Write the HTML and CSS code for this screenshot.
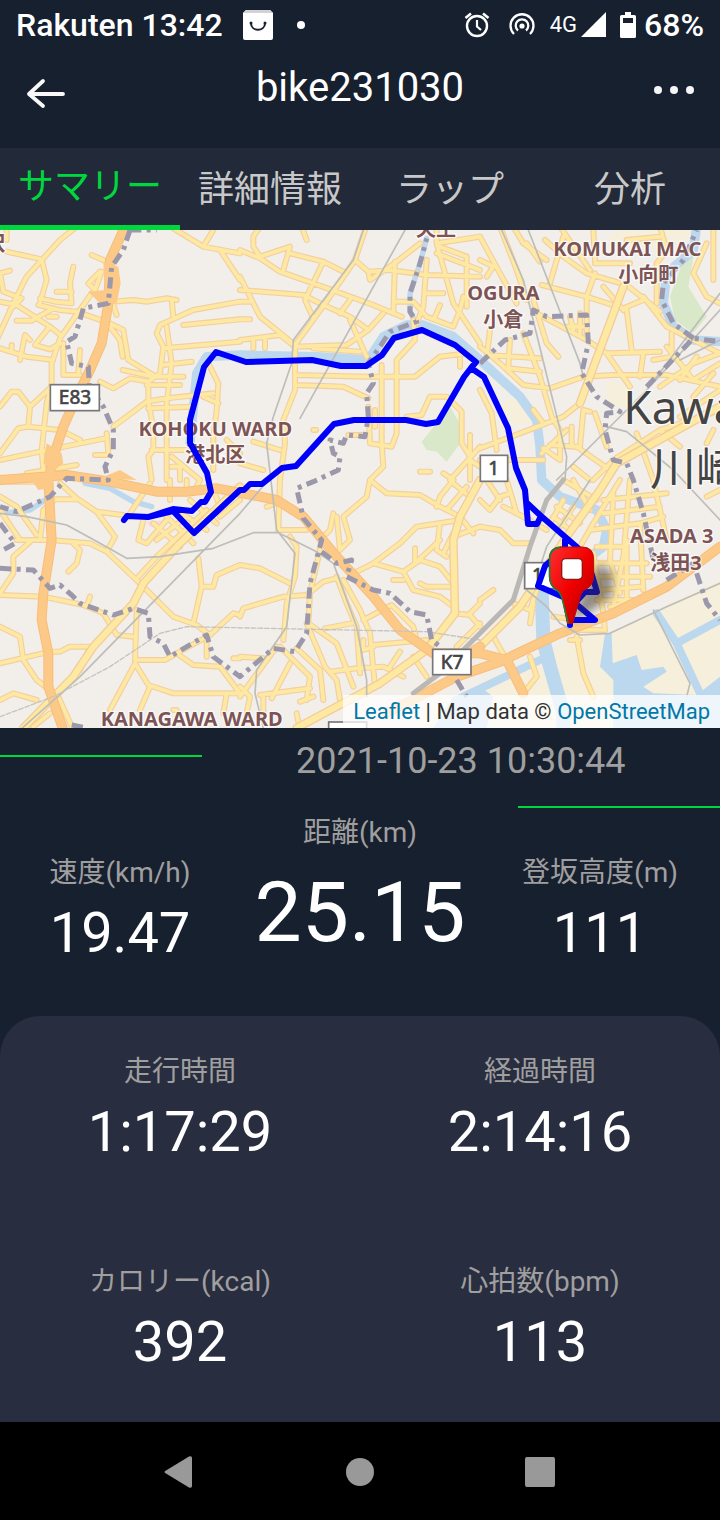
FILE: index.html
```html
<!DOCTYPE html>
<html lang="ja">
<head>
<meta charset="utf-8">
<meta name="viewport" content="width=device-width, initial-scale=1">
<title>bike231030</title>
<link rel="stylesheet" href="styles.css">
</head>
<body>
<div class="app">
  <div class="status">
    <div class="status-left">
      <span class="status-text">Rakuten 13:42</span>
      <svg class="bag" viewBox="0 0 30 30" width="30" height="30" aria-hidden="true"><path d="M3 0H27L30 3V28Q30 30 28 30H2Q0 30 0 28V3Z" fill="#fff"/><path d="M3 0H27L30 3H0Z" fill="#d3d3d6"/><path d="M8 13C8 22 22 22 22 13" fill="none" stroke="#182030" stroke-width="2"/><circle cx="8" cy="13" r="1.5" fill="#182030"/><circle cx="22" cy="13" r="1.5" fill="#182030"/></svg>
      <svg viewBox="0 0 8 8" width="8" height="8" aria-hidden="true"><circle cx="4" cy="4" r="4" fill="#fff"/></svg>
    </div>
    <div class="status-right">
      <svg viewBox="0 0 26 26" width="26" height="26" fill="none" stroke="#fff" aria-hidden="true"><circle cx="13" cy="14" r="10" stroke-width="2.4"/><path d="M1.5 6L7 1.5M24.500 6L19 1.500" stroke-width="2.600"/><path d="M13 8V14.500L17 18" stroke-width="2.200"/></svg>
      <svg class="cast" viewBox="0 0 26 26" width="26" height="26" fill="none" stroke="#fff" stroke-width="2.300" aria-hidden="true"><circle cx="13" cy="14" r="2.600" fill="#fff" stroke="none"/><path d="M9 18.500A6.300 6.300 0 1 1 17 18.500M5 22A11.500 11.500 0 1 1 21 22"/></svg>
      <span class="net">4G</span>
      <svg viewBox="0 0 25 26" width="25" height="26" aria-hidden="true"><path d="M25 0V25H0Z" fill="#fff"/></svg>
      <svg class="battery" viewBox="0 0 16 26" width="16" height="26" aria-hidden="true"><path fill="#fff" fill-rule="evenodd" d="M5 0H11V3H14.500Q16 3 16 4.500V24.500Q16 26 14.500 26H1.500Q0 26 0 24.500V4.500Q0 3 1.500 3H5ZM3 6V11H13V6Z"/></svg>
      <span class="status-text">68%</span>
    </div>
  </div>

  <header class="header">
    <button class="icon-button back" aria-label="戻る"><svg viewBox="0 0 40 32" width="40" height="32" fill="none" stroke="#f8f8f8" stroke-width="3.800" stroke-linecap="round" stroke-linejoin="round"><path d="M17 3L3 16L17 28M3 16H37"/></svg></button>
    <h1 class="title">bike231030</h1>
    <button class="icon-button more" aria-label="メニュー"><svg viewBox="0 0 40 8" width="40" height="8" fill="#f5f5f5"><circle cx="4" cy="4" r="4"/><circle cx="20" cy="4" r="4"/><circle cx="36" cy="4" r="4"/></svg></button>
  </header>

  <nav class="tabs" role="tablist">
    <button class="tab tab-active" role="tab" aria-selected="true">サマリー</button>
    <button class="tab" role="tab" aria-selected="false">詳細情報</button>
    <button class="tab" role="tab" aria-selected="false">ラップ</button>
    <button class="tab" role="tab" aria-selected="false">分析</button>
  </nav>

  <div class="map">
    <svg class="map-canvas" viewBox="0 0 2160 1494" preserveAspectRatio="xMidYMid slice" role="img" aria-label="走行ルート">
      <defs>
        <linearGradient id="pin" x1="0" y1="0" x2="1" y2="1"><stop offset="0" stop-color="#ff3030"/><stop offset=".5" stop-color="#f00000"/><stop offset="1" stop-color="#a80000"/></linearGradient>
        <filter id="soft" x="-50%" y="-50%" width="200%" height="200%"><feGaussianBlur stdDeviation="12"/></filter>
        <g id="roads">
          <path d="M-10 330L45 210 80 140 180 30 230-10M20 65L125 88 140 150 118 225M30 122L0 130 10 185 65 205 30 240M0 215L50 225 150 290 185 318M220 110L210 160 215 220 165 215 120 205M170 185H215M115 225L180 240 230 245M50 272H95L160 235M145 260H170M275 190L180 325 155 400V460M150 358L105 345 145 295M150 358L180 340M0 355L80 380 160 390M35 345V365M60 390L75 315 90 330M0 530L35 485H55L90 530 85 590M90 530L150 475M0 670L55 595 85 590 180 600 240 630M0 690L120 665 315 625M155 460L140 520 125 660 130 720M275 75L310 90M300 125L265 160 285 180 305 125M340 215L400 210 440 215 500 205 530 210M230 245L330 280 370 300 385 390 460 435M330 290L360 330 368 380M340 225L350 255M720 215L580 240 480 285 470 310 490 350 480 430 445 455V510M550 285L720 268M490 355L720 335M515 210L520 260M500 290L515 400 500 520V750M368 420L460 440H550M440 465H540M490 405L575 395M300 455L340 475 390 445 445 455M340 590L440 515 500 505 640 490M445 535L580 530M445 510L460 600V660L445 680 455 750M190 340V435H240M240 360L235 430M520-5L610 50 720 70M610 50L640 0M660 60L720 150M625 400L655 460 650 540 640 620V720M610 500L655 520M455 660H560M285 675H325M320 610L325 670M515 680L600 750M515 710H540V750M80 730L230 705M20-10V30M680 630L720 670"/>
          <g transform="translate(720)"><path d="M0 60L60 85 120 125 220 160 290 185 400 225 485 260M60-10L40 20V50L60 80 150 50 130 120M150 70L250 95 310 125M185-10L200 30M250 95L195 210 220 265M0 180L190 195 250 225 330 260 385 300 430 250M0 140L60 260 165 345M375 0L345 90 270 200 165 345M345 90L385 125 390 150 470 95M390 125L450 120 560 135 720 140M465 95L460 250M540 40L470 95M465 215H520L560 260 640 290 660 240 670 200M560 90L550 230 530 280M590 40L640 220 720 340M600 50L680 80V230M590 70L720 120M560 190H610M600 225L585 260M0 330L120 315 165 350 320 345 385 300M165 345V480L130 570 135 640 120 750M165 435L380 440H525L600 380 680 370M170 465L310 470 385 505M330 270L380 380M220 355L360 365M520 270L525 330 470 390V610L455 650 390 640 385 530M425 405V640L430 710 390 750M405 540V590M40 635L120 660M0 700L70 720M0 215H30M0 268H30M40 330V355M75 325V355M330 210L300 250M500 560L545 555 570 500H620L665 545V640L690 680M690 615V750M630 750L720 650M325 615H380M540 725H570M660 385V410M610 730L640 750M220 600H228M690 690L720 710M590-10V40L720 20"/></g>
          <g transform="translate(1440)"><path d="M60-10L110 120 140 210M0 90L40 110 20 140M100-10L130 40 200 90M140 40L180 95M250 20L210 160M195 30L250 80 320 130 440 165 540 245M240-10L330 120M340 0L345 90M345 100H450M345 130L320 200M185 165L320 200 430 235 490 210M430 170L340 400 300 520 250 560 120 610 0 655M320 200V330M440 240L455 360M440 30L540 20M540-10L560 60 530 100V220M490 200L560 290 720 370M700 0V150M680 40L640 130 680 200 720 220M0 350L60 400 130 465 210 475 310 440 400 435H560L720 470M20 375L180 385M90 330L85 410M130 310L180 440 215 560 240 600V690M85 415L180 425M160 210L200 340 235 380M170 250L320 330 380 370 540 365M260 290H320M270 260L280 300M300 250V310M380 370L450 470M490 370L480 440M575 310V380L520 390M720 370L640 400 540 470M700 430L640 500M720 480L600 560M275 590V650H300L310 540 330 545M345 550L380 650M470 610L520 750M720 540L540 600 400 690 340 750M0 480L35 550 50 660M30 300L20 380M0 690H190M185 670L260 600M190 655L240 690M210 645L290 650 390 720M280 710L330 750M540 600L600 650M700 600L680 640M160 540L190 580M560 350L640 450 720 400M600 450L650 380M370 170L430 240M0 20L60 130 110 220"/></g>
          <g transform="translate(0 750)"><path d="M0 5H130M180 10L230 55 290 95 370 105M230 58H165L130 90 120 180M0 50L50 80 110 165M0 90L60 180M0 340L40 280V230L90 185M50 180H150L270 190 320 215 420 310 520 410 590 435 630 465M220 190L240 210 230 250 205 275M290 95L345 170 320 215M0 345L130 350 250 375 310 400 350 465 400 470M270 350L260 380M410 390L405 540H495L630 465 700 400 720 405M0 440L60 470 70 540 110 600 150 630M0 550L150 515H180L210 500H270L240 570M405 550L330 690M405 550L445 615 520 640H720M450 620L420 690M530 520L580 555 660 560 720 640M680 640L670 700M595 235L605 320 580 430M605 320H640L650 285 720 255M620 470V530M0 660L40 640 110 660M150 700L100 740M430 120L415 180 440 190 500 120M460 130L540 200M490 100L580 190M530 90L620 150M415 290L470 230 620 90M470 180L560 110M510 0V60M390 100L450 10M640 30L660 80M570 60L650 130M660 110L720 60M700 535H720M170 640L220 750M520 690H530M560 0V20M600 0L590 20"/></g>
          <g transform="translate(720 750)"><path d="M390 0L440 40 540 45 600 80 660 110 700 160M390 0L380 50 310 110 330 180 300 210 290 110M280 100L270 150 240 180M660 110L640 180M590 80L600 50 640 0M620 90L680 20M640 10L690 50M660 120L530 140 480 190 400 250 340 280M400 250L490 275 520 330 600 350 640 380M490 275L540 240 600 260 640 310M525 205V250L600 180M460 300H490M540 310L560 320H640M600 130L590 210 620 230M610 220L640 160M640 170L720 140M640 400L690 405 720 440M690 400L720 370M0 255L60 265 150 310M120 0L115 150H200M80 80L110 70M150 170L170 200 165 290 140 370 130 480M0 410L10 385 130 350 200 345 250 305 290 295M240 210L210 340 205 430 290 490 340 620M290 290L320 370 350 440 360 580M310 300L360 390 390 460 405 620M370 420L455 375 520 440 530 480M255 445L335 430M400 495L560 480M370 480V510L400 500M120 500L210 590 200 660M170 505L240 570 250 660M150 550L95 655M60 645L210 625M270 575L350 565 430 560 490 590M480 515L450 560M0 650L110 500M0 620L30 650 20 700M0 530L70 535M200 430L255 560 290 600 300 660M520 530L560 590M170 700L180 750M70 650V700M650 500L720 430M180 665L220 650"/></g>
          <g transform="translate(1440 750)"><path d="M0 60L30 90 60 50 90 40M0 140L60 150 100 190H150M70 80L150 120M20 0L60 60M250 0L350 60M420 0L340 130 300 200M230 80L300 130M220 110L270 150M250 60L210 130M280 80L240 140M330 150L480 130 550 110M400 40L390 240 420 340M350 250H500M350 290H510M360 330L480 320M450 0L430 230 400 380M520 0L560 180M370 60L560 40M370 100L540 80M480 130L490 330M340 220L370 400M440 180V370M0 500L130 360 160 320M100 370L150 390 170 330M150 430L160 370M290 470L310 580 340 650M150 530L170 590 130 640M40 470L80 540M270 480H300M220 410L300 420M370 400L375 450H300M720 30L680 50M0 360L40 330M350 360H480M390 380L470 360M350 200H440M80 0L110 100 200 150M280 0L330 90"/></g>
        </g>
        <g id="primary"><path d="M70 1494L220 1340 280 1250 400 1120 430 1060 540 940 720 770M890 1494L1140 1360 1280 1260 1365 1150 1360 930 1380 860 1440 750M1440 1250L1560 1130 1620 1040 1700 920 1800 780 1850 700 2160 530M1870 170L1740 520"/></g>
        <g id="motorways"><path d="M375-10L330 90 325 220 305 340 270 420 230 500 190 590 160 680 145 750 155 930 130 1090 125 1170 145 1270V1370L190 1500M0 750L200 735 330 755 470 785 560 785 650 775 780 800 830 810 910 860 1010 980 1120 1100 1200 1200 1300 1270H1440L1520 1290 1570 1390M1160 1450L1370 1340 1500 1295 1680 1210 1840 1150 2000 1070 2160 950M1300 1270L1360 1300 1440 1250"/></g>
      </defs>
      <rect width="2160" height="1494" fill="#f2eee9"/>
      <path class="industry" d="M1200 1494L1440 1360 1740 1220 1820 1210 1970 1140 2160 1050V1494ZM1560 500L1620 530 1610 570 1500 600 1500 520ZM1820 455L1890 460V530H1820ZM1850 0H2100L2000 60 1820 30Z"/>
      <path class="park" d="M1265 635L1350 530 1385 590 1380 640 1340 695 1310 665 1280 660ZM2050 90L2080 80 2065 170 2120 260 2080 310 2025 270 2010 200Z"/>
      <path d="M440 875L500 870 480 895 450 890Z" fill="#fbd8e8"/>
      <path class="water" stroke-width="28" d="M570 640L590 430 620 380 720 375 950 380 1105 390 1150 320 1220 285H1270L1360 320 1440 390 1560 500 1610 570 1620 650 1625 750 1680 800 1790 840 1820 900 1810 950 1770 980M2090-10L2080 60 2000 130 1990 220 2020 290 2080 330 2160 335"/>
      <path class="water" stroke-width="16" d="M1280 25L1260 100 1230 190V245L1250 285M255 760L330 775 400 815 455 830M0 850L90 840 150 800"/>
      <path class="water" stroke-width="42" d="M1625 1080L1630 1230 1650 1310 1690 1450V1500"/>
      <path class="water" stroke-width="24" d="M1390 1400L1620 1290M1970 1150L2030 1240 2100 1390M2030 1240L2160 1170"/>
      <path fill="#bbd8ee" d="M1815 1210H1835L1838 1300 1910 1275 1925 1320 1990 1310 2000 1325 1930 1370 1960 1390 2090 1395 2160 1340V1494H1840V1350L1800 1310ZM1360 1400L1440 1370 1480 1400 1460 1494H1300Z"/>
      <use href="#roads" class="road-casing"/>
      <use href="#roads" class="road-fill"/>
      <use href="#primary" class="primary-casing"/>
      <use href="#primary" class="primary-fill"/>
      <use href="#motorways" class="motorway-casing"/>
      <use href="#motorways" class="motorway-fill"/>
      <path fill="#fcc986" d="M310 95L355 110 362 160 350 220 310 230 265 185 315 180ZM140 640L185 670 190 700 165 720 130 700ZM300 745L360 720 410 750ZM95 750H160L145 775 115 780Z"/>
      <path class="rail" d="M1090 0L1060 90 880 330 875 400 820 560 800 640 830 900 885 970 860 1190 770 1320 765 1390 790 1494M1215 0L900 565M1505 0L1570 150 1700 680 1695 750M1585 0L1655 180 1740 400 1750 440M1670 750L1940 480 2160 190M1940 480L2160 240M2040 390L2160 330M1820 590L1880 605 2020 720 2160 870M0 850L80 860 200 885 300 940 380 985 480 980 640 955 760 908H835L950 965 1000 1000 1070 1190 1100 1350V1400M60 1500L240 1340 720 850 830 720M1580 1080L1640 1130 1680 1180 1740 1215 1830 1210 2000 1130 2160 1060M1960 1140L2070 1360 2060 1400M1770 750L1640 950 1620 1010"/>
      <path class="rail-thin" d="M0 1460L160 1400 330 1310 480 1210 560 1190 1280 1205 1440 1230"/>
      <path class="rail-wide" d="M1240 1390L1320 1330 1440 1210 1540 1110 1590 950 1640 810 1690 750"/>
      <path class="border" d="M390 0L370 60 335 110 325 220 250 235 225 320 200 335 215 400 265 410 268 470 310 530 340 600V660L315 710 325 750 200 745 150 800 50 845 0 830M390 0H470M0 880L45 940 0 965M0 1015L100 1020 150 1075 180 1065 215 1095 240 1120 340 1155 400 1135 445 1150 450 1220 490 1240 510 1280 620 1215 640 1280 720 1340 820 1255 885 1265 920 1210 930 1060 965 930 910 865 890 775 940 755 1015 720 1020 680 1000 670 990 630 1030 640 1040 615 1095 620 1105 560 1100 490 1120 460 1105 400 1140 350 1170 305 1250 275 1230 245V190L1260 100 1280 25M965 965L1010 1000 1055 990 1040 1040 1120 1080 1170 1090 1230 1145 1280 1155 1295 1230 1320 1250M1370 1350L1400 1400M1440 400L1515 330 1590 310 1600 240 1640 260 1760 255 1765 340 1745 430 1790 500 1860 545 1820 550 1815 600 1840 690 1880 700 1900 750 1930 850 1960 990M1940 470L2080 325 2160 335M2080 325L2020 280 1985 210 1990 160 2050 90 2090 0M2000 1050L2080 1000M2090 1030L2120 1120 2160 1170M215 1485L260 1494"/>

      <g class="shield">
        <rect x="151" y="464" width="147" height="78"/><text x="225" y="523">E83</text>
        <rect x="1441" y="676" width="82" height="78"/><text x="1481" y="735">1</text>
        <rect x="1574" y="998" width="115" height="78"/><text x="1612" y="1055">1</text>
        <rect x="1298" y="1258" width="115" height="76"/><text x="1356" y="1316">K7</text>
        <rect x="986" y="1476" width="114" height="76"/>
      </g>
      <g class="place">
        <text x="646" y="617">KOHOKU WARD</text><text x="646" y="696">港北区</text>
        <text x="1510" y="210">OGURA</text><text x="1510" y="290">小倉</text>
        <text x="1660" y="77" class="from-start">KOMUKAI MAC</text><text x="1945" y="155">小向町</text>
        <text x="575" y="1487">KANAGAWA WARD</text>
        <text x="1890" y="940" class="from-start">ASADA 3</text><text x="2028" y="1020">浅田3</text>
        <text x="1308" y="18">天王</text><text x="-44" y="62" class="from-start">沢</text>
      </g>
      <g class="city"><text x="1870" y="582">Kawasaki</text><text x="1950" y="765">川崎</text></g>

      <g transform="scale(3) translate(0 -230)" class="route">
        <path d="M124 520L127 516 148 517 173 509 192 511 201 502H205L211 492 207 473 190 443V420L204 367 216 352 246 362 312 360 341 366H366L382 355 394 338 422 330 455 345 476 362 471 368 484 377 508 428 516 468 525 490 528 524H537L541 516M527 503L541 516 578 548 592 575 597 592H585L575 603 595 620H570V625M565 540V548L545 566 538 586 570 600M471 368L464 377 438 422 426 424 406 420H354L334 424 296 466 282 468 262 484H250L244 490H240L194 533 173 511 148 517"/>
      </g>
      <g transform="translate(1440 750)">
        <path d="M272 425L320 310 360 250 400 280 395 350 330 395Z" fill="#332c20" opacity=".5" filter="url(#soft)"/>
        <path d="M242 201H306Q341 201 341 238V290Q341 318 310 332 302 342 298 360L278 430H262L248 360Q244 340 232 332 208 318 208 290V238Q208 201 242 201Z" fill="url(#pin)" stroke="#b80c0c" stroke-width="3"/>
        <path d="M240 202Q209 204 209 238V290Q210 318 232 332 244 342 248 362L264 428" fill="none" stroke="#287b35" stroke-width="5"/>
        <rect x="245" y="236" width="62" height="62" rx="12" fill="#fff" stroke="#8a1a14" stroke-width="4"/>
      </g>
    </svg>
    <div class="attribution"><a href="#leaflet">Leaflet</a> | Map data © <a href="#osm">OpenStreetMap</a></div>
  </div>

  <main class="content">
    <div class="date-row">
      <span class="rule rule-start"></span>
      <time class="date" datetime="2021-10-23T10:30:44">2021-10-23 10:30:44</time>
    </div>
    <div class="rule rule-end"></div>
    <section class="headline">
      <div class="stat"><span class="label">速度(km/h)</span><span class="value">19.47</span></div>
      <div class="stat stat-main"><span class="label">距離(km)</span><span class="value">25.15</span></div>
      <div class="stat"><span class="label">登坂高度(m)</span><span class="value">111</span></div>
    </section>
    <section class="panel">
      <div class="stat"><span class="label">走行時間</span><span class="value">1:17:29</span></div>
      <div class="stat"><span class="label">経過時間</span><span class="value">2:14:16</span></div>
      <div class="stat"><span class="label">カロリー(kcal)</span><span class="value">392</span></div>
      <div class="stat"><span class="label">心拍数(bpm)</span><span class="value">113</span></div>
    </section>
  </main>

  <nav class="system-nav">
    <button class="icon-button" aria-label="前の画面"><svg viewBox="0 0 32 34" width="32" height="34"><path d="M2 15.500L25 1.500Q28 .5 28 3V31Q28 33.500 25 32.500L2 18.500Q-1 17 2 15.500Z" fill="#999"/></svg></button>
    <button class="icon-button" aria-label="ホーム"><svg viewBox="0 0 28 28" width="28" height="28"><circle cx="14" cy="14" r="14" fill="#999"/></svg></button>
    <button class="icon-button" aria-label="アプリ一覧"><svg viewBox="0 0 30 30" width="30" height="30"><rect width="30" height="30" rx="2" fill="#999"/></svg></button>
  </nav>
</div>
</body>
</html>
```
FILE: styles.css
```css
* { box-sizing: border-box; }

body {
  margin: 0;
  background: #17202f;
  color: #fff;
  font-family: Roboto, "Noto Sans CJK JP", sans-serif;
}

button {
  margin: 0;
  padding: 0;
  border: 0;
  background: none;
  color: inherit;
  font: inherit;
}

svg { display: block; flex: none; }

.app {
  display: flex;
  flex-direction: column;
  min-height: 100vh;
}

.status {
  display: flex;
  justify-content: space-between;
  height: 50px;
  padding: 0 16px;
}

.status-left,
.status-right {
  display: flex;
  align-items: center;
}

.status-left { gap: 24px; }
.status-left .bag { margin-left: -4px; }
.status-text { font-size: 32px; font-weight: 500; line-height: 48px; }
.cast { margin-left: 19px; }
.net { margin: 0 4px 0 15px; font-size: 22px; line-height: 48px; }
.battery { margin: 0 8px 0 14px; }

.header {
  display: grid;
  grid-template-columns: 80px 1fr 80px;
  align-items: center;
  height: 98px;
  padding: 0 0 22px;
}

.title {
  margin: 0;
  font-size: 40px;
  font-weight: 400;
  line-height: 48px;
  text-align: center;
}

.icon-button {
  display: flex;
  align-items: center;
  justify-content: center;
}

.back { padding: 12px 0 0 12px; }
.more { padding: 4px 0 0; justify-content: flex-start; padding-left: 14px; }

.tabs {
  display: grid;
  grid-template-columns: repeat(4, 1fr);
  height: 82px;
  background: #222938;
}

.tab {
  padding-top: 2px;
  color: #c8c8c8;
  font-size: 36px;
  line-height: 48px;
}

.tab-active {
  padding-top: 0;
  border-bottom: 5px solid #00d73f;
  color: #00d73f;
}

.map {
  position: relative;
  aspect-ratio: 720 / 498;
  overflow: hidden;
}

.map-canvas { width: 100%; height: 100%; }

.map-canvas path,
.map-canvas use { stroke-linecap: round; stroke-linejoin: round; }

.industry { fill: #f5efdb; }
.park { fill: #d8e8c8; }
.water { fill: none; stroke: #bbd8ee; }
.road-casing, .road-fill, .primary-casing, .primary-fill,
.motorway-casing, .motorway-fill { fill: none; }
.road-casing { stroke: #f3cfa0; stroke-width: 18; }
.road-fill { stroke: #fee9a3; stroke-width: 11; }
.primary-casing { stroke: #f3cc98; stroke-width: 26; }
.primary-fill { stroke: #fee9a3; stroke-width: 18; }
.motorway-casing { stroke: #f8bd7c; stroke-width: 30; }
.motorway-fill { stroke: #fcc986; stroke-width: 24; }
.rail { fill: none; stroke: #bdbdb9; stroke-width: 5; }
.rail-thin { fill: none; stroke: #c6c4c0; stroke-width: 4; stroke-dasharray: 14 6; }
.rail-wide { fill: none; stroke: #b9b8b5; stroke-width: 15; }
.map-canvas .border {
  fill: none;
  stroke: #9c98ab;
  stroke-width: 15;
  stroke-dasharray: 34 16 12 16;
  stroke-linecap: butt;
}

.shield rect { fill: #fff; stroke: #77777a; stroke-width: 5; }
.shield text {
  fill: #444;
  stroke: #444;
  stroke-width: 2;
  font: 57px "Noto Sans", sans-serif;
  text-anchor: middle;
}

.place text {
  fill: #7d5455;
  stroke: #fff;
  stroke-width: 8;
  stroke-opacity: .7;
  paint-order: stroke;
  font: 700 60px "Noto Sans", "Noto Sans CJK JP", sans-serif;
  text-anchor: middle;
}

.place .from-start { text-anchor: start; }

.city text {
  fill: #444;
  stroke: #fff;
  stroke-width: 8;
  stroke-opacity: .7;
  paint-order: stroke;
  font: 138px "Noto Sans", "Noto Sans CJK JP", sans-serif;
}

.route { fill: none; stroke: #0000fa; stroke-width: 6; }

.attribution {
  position: absolute;
  right: 0;
  bottom: 0;
  padding: 0 10px;
  background: rgba(255, 255, 255, .75);
  color: #333;
  font-size: 22px;
  line-height: 33px;
}

.attribution a { color: #0078a8; text-decoration: none; }

.content {
  display: flex;
  flex: 1;
  flex-direction: column;
}

.date-row {
  display: flex;
  height: 78px;
}

.rule {
  width: 28%;
  height: 2px;
  background: #00d73f;
}

.rule-start { margin-top: 27px; }
.rule-end { align-self: flex-end; }

.date {
  flex: 1;
  padding-top: 9px;
  color: #a09f9f;
  font-size: 36px;
  line-height: 48px;
  text-align: center;
}

.headline {
  display: grid;
  grid-template-columns: repeat(3, 1fr);
  align-items: start;
  padding-bottom: 53px;
}

.stat {
  display: flex;
  flex-direction: column;
  gap: 10px;
  text-align: center;
}

.label {
  color: #a09f9f;
  font-size: 28px;
  line-height: 40px;
}

.value {
  font-size: 56px;
  line-height: 60px;
}

.headline .stat { padding-top: 45px; }
.headline .stat-main { padding-top: 5px; gap: 18px; }
.stat-main .value { font-size: 84px; line-height: 84px; }

.panel {
  display: grid;
  flex: 1;
  grid-template-columns: repeat(2, 1fr);
  align-content: start;
  row-gap: 100px;
  padding: 36px 0 50px;
  border-radius: 40px 40px 0 0;
  background: #282e40;
}

.system-nav {
  display: grid;
  grid-template-columns: repeat(3, 1fr);
  height: 98px;
  padding: 2px 12.5% 0;
  background: #000;
}
```
